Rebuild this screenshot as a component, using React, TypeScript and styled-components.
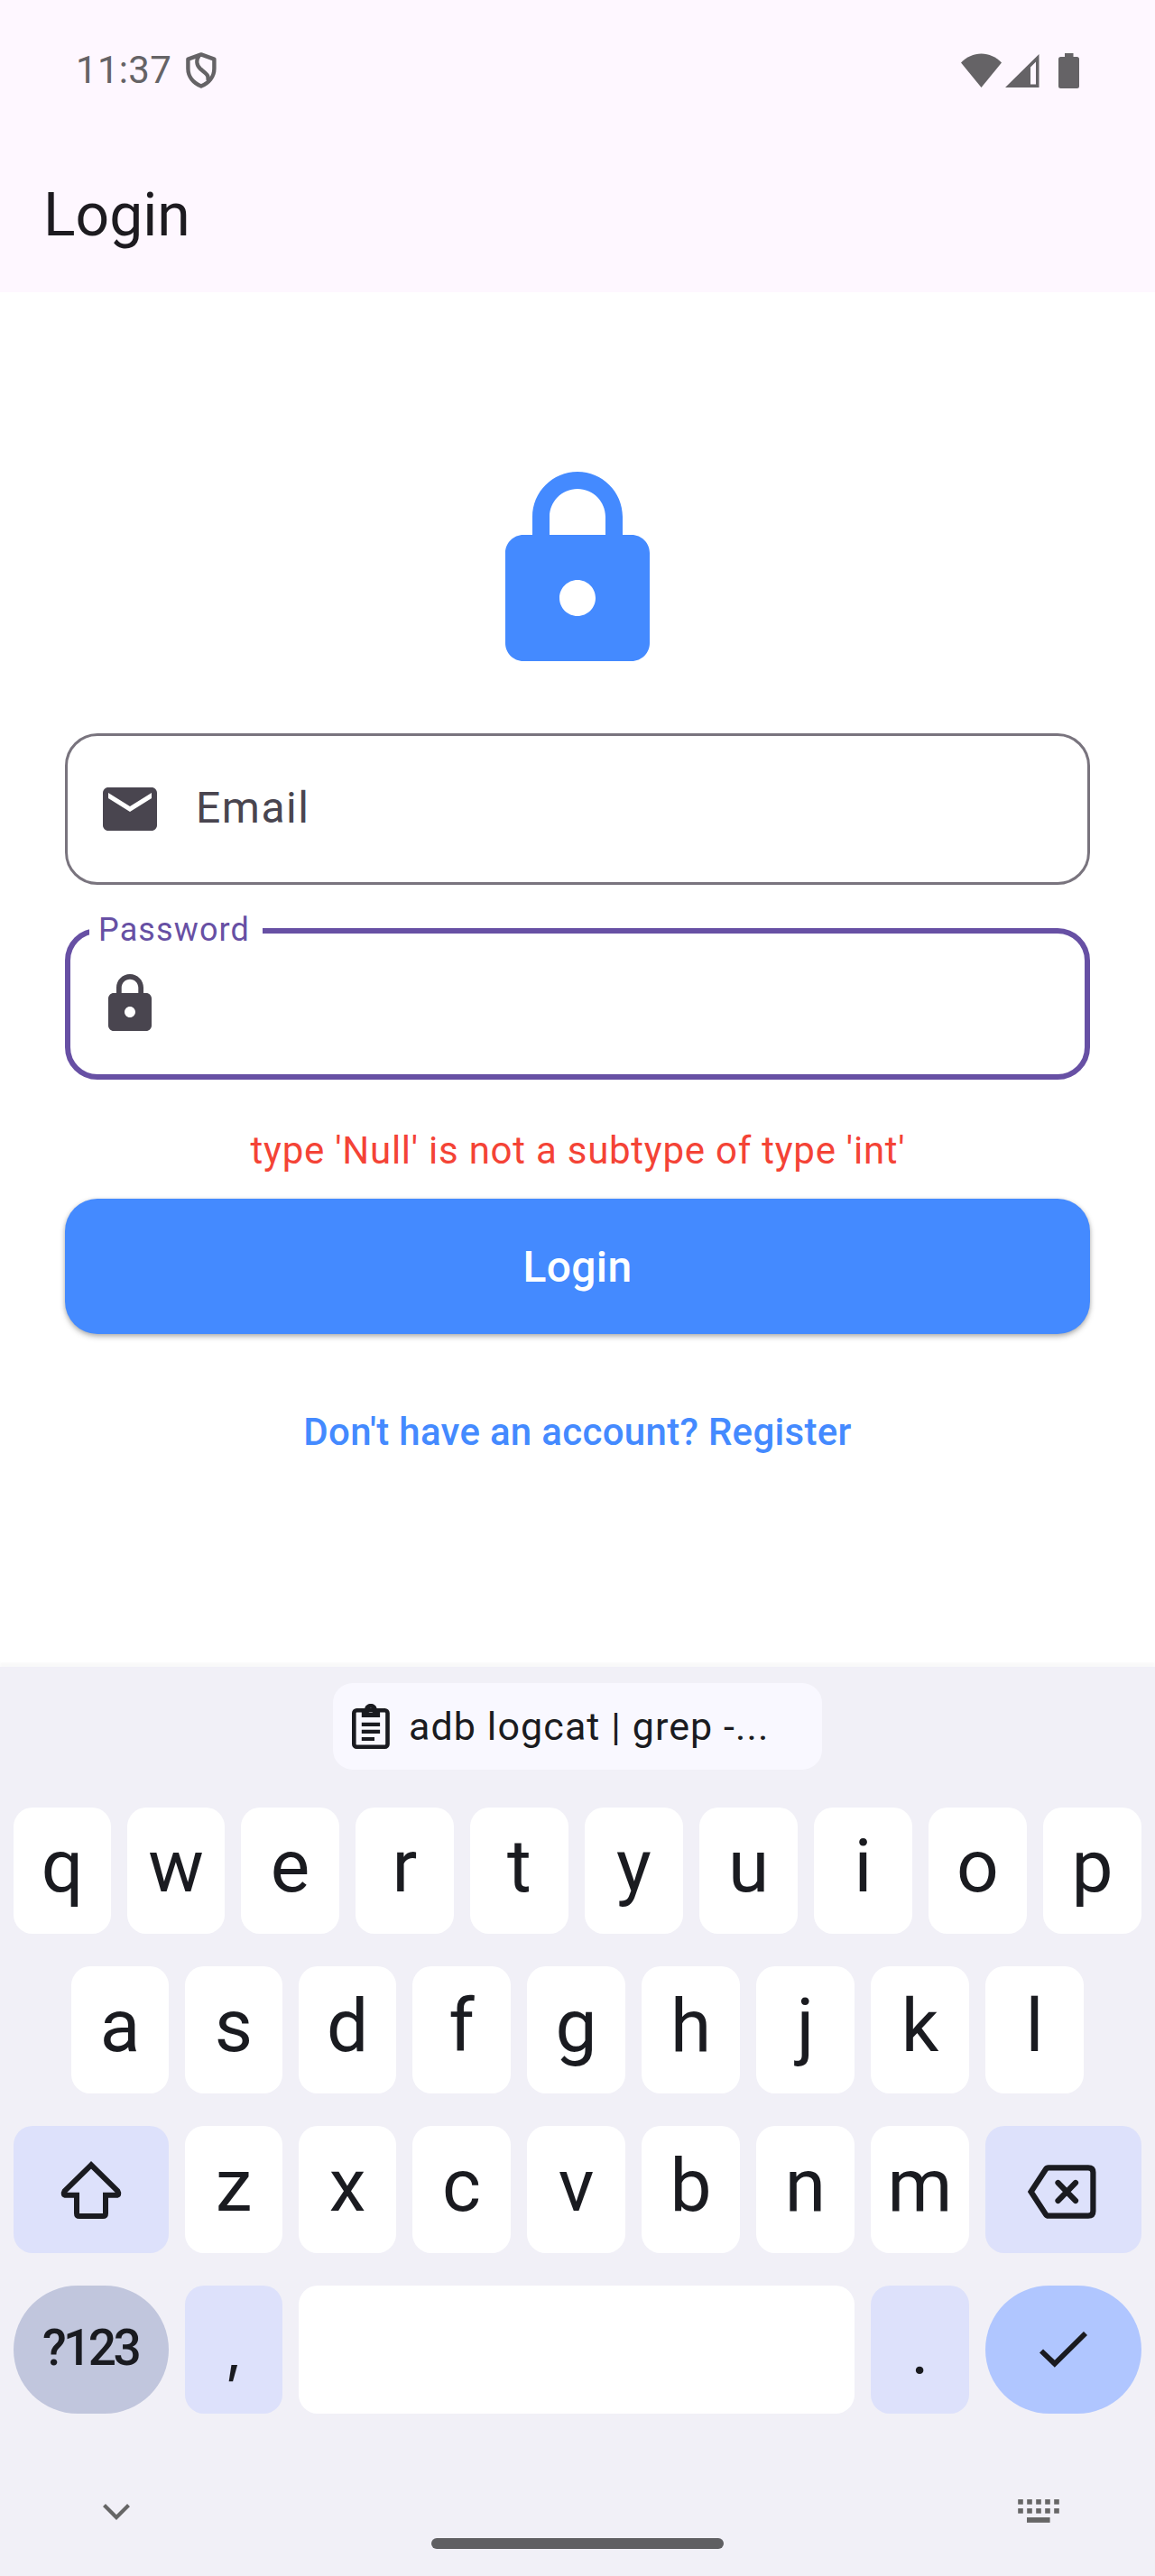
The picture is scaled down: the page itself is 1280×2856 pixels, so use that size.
import React from "react";
import styled, { createGlobalStyle, css } from "styled-components";

const GlobalStyle = createGlobalStyle`
  *, *::before, *::after { box-sizing: border-box; }
  body { margin: 0; background: #ffffff; }
`;

const Screen = styled.div`
  width: 1280px;
  height: 2856px;
  display: flex;
  flex-direction: column;
  overflow: hidden;
  background: #ffffff;
  font-family: Roboto, "Liberation Sans", sans-serif;
  color: #1d1b20;
`;

const Icon = styled.svg`
  display: block;
  flex: none;
`;

/* Top of the screen */

const StatusBar = styled.header`
  height: 156px;
  padding: 0 84px;
  display: flex;
  align-items: center;
  justify-content: space-between;
  background: #fef7ff;
  color: #656366;
`;

const StatusGroup = styled.div<{ $gap: number }>`
  display: flex;
  align-items: center;
  gap: ${(p) => p.$gap}px;
`;

const BatterySlot = styled.div`
  margin-left: 17px;
`;

const Clock = styled.span`
  width: 107px;
  font-size: 42px;
  line-height: 50px;
  letter-spacing: 0.3px;
`;

const AppBar = styled.div`
  height: 168px;
  padding: 0 48px 3px;
  display: flex;
  align-items: center;
  background: #fef7ff;
`;

const Title = styled.h1`
  margin: 0;
  font-size: 66px;
  font-weight: 400;
  line-height: 84px;
`;

/* Login form */

const Form = styled.main`
  height: 1524px;
  padding: 189px 72px 0;
  display: flex;
  flex-direction: column;
  align-items: center;
`;

const Field = styled.div<{ $focused?: boolean }>`
  position: relative;
  width: 100%;
  height: 168px;
  display: flex;
  align-items: center;
  gap: 37px;
  border-radius: 36px;
  color: #49454f;
  ${(p) =>
    p.$focused
      ? css`
          margin-top: 48px;
          padding: 0 30px;
          border: 6px solid #6750a4;
        `
      : css`
          margin-top: 60px;
          padding: 0 33px;
          border: 3px solid #79747e;
        `}
`;

const Placeholder = styled.span`
  padding-bottom: 3px;
  font-size: 48px;
  line-height: 60px;
  letter-spacing: 1.5px;
`;

const FloatingLabel = styled.label`
  position: absolute;
  left: 21px;
  top: -25px;
  width: 192px;
  padding-left: 10px;
  background: #ffffff;
  color: #6750a4;
  font-size: 36px;
  line-height: 42px;
  letter-spacing: 1.125px;
  white-space: nowrap;
`;

const ErrorText = styled.p`
  margin: 49px 0 23px;
  padding-left: 1px;
  color: #f44336;
  font-size: 42px;
  line-height: 60px;
  letter-spacing: 0.75px;
  white-space: nowrap;
`;

const SubmitButton = styled.button`
  width: 100%;
  height: 150px;
  padding: 2px 0 0;
  border: 0;
  border-radius: 36px;
  background: #448aff;
  color: #ffffff;
  font: 500 48px/60px Roboto, "Liberation Sans", sans-serif;
  letter-spacing: 0.3px;
  box-shadow: 0 3px 6px rgba(0, 0, 0, 0.26), 0 1px 4px rgba(0, 0, 0, 0.12);
`;

const RegisterLink = styled.a`
  margin-top: 79px;
  color: #448aff;
  font-size: 42px;
  font-weight: 500;
  line-height: 60px;
  letter-spacing: 0.3px;
  white-space: nowrap;
`;

/* On-screen keyboard */

const Keyboard = styled.section`
  flex: 1;
  display: flex;
  flex-direction: column;
  align-items: center;
  padding-top: 18px;
  background: #f1f0f7;
  color: #1a1b20;
  box-shadow: 0 -5px 2px rgba(0, 0, 0, 0.022);
`;

const ClipChip = styled.div`
  width: 542px;
  height: 96px;
  padding-left: 21px;
  display: flex;
  align-items: center;
  gap: 21px;
  border-radius: 22px;
  background: #f9f8ff;
  font-size: 43px;
  font-weight: 450;
  line-height: 56px;
  letter-spacing: 1.1px;
  white-space: nowrap;
`;

const KeyGrid = styled.div`
  width: 100%;
  margin-top: 42px;
  display: grid;
  grid-template-rows: 140px 141px 141px 142px;
  gap: 36px;
`;

const KeyRow = styled.div<{ $inset: number; $columns: string }>`
  padding: 0 ${(p) => p.$inset}px;
  display: grid;
  grid-template-columns: ${(p) => p.$columns};
  gap: 18px;
`;

const tones = {
  plain: "#ffffff",
  soft: "#dde1fb",
  mode: "#c1c6dd",
  action: "#b0c6ff",
};

const Key = styled.div<{ $tone?: keyof typeof tones; $pill?: boolean }>`
  min-width: 0;
  display: flex;
  align-items: center;
  justify-content: center;
  border-radius: ${(p) => (p.$pill ? 71 : 21)}px;
  background: ${(p) => tones[p.$tone ?? "plain"]};
`;

const Glyph = styled.span`
  padding-bottom: 10px;
  font-size: 82px;
  line-height: 100px;
`;

const Punctuation = styled.span<{ $slanted?: boolean }>`
  font-family: ${(p) => (p.$slanted ? "Inter" : "Roboto")}, sans-serif;
  font-size: ${(p) => (p.$slanted ? 66 : 76)}px;
  line-height: 90px;
`;

const ModeLabel = styled.span`
  padding-bottom: 4px;
  margin-right: 2px;
  font-size: 55px;
  font-weight: 500;
  line-height: 64px;
  letter-spacing: -3.6px;
`;

const DeleteSlot = styled.div`
  padding: 5px 3px 0 0;
`;

const NavBar = styled.nav`
  width: 100%;
  height: 180px;
  padding-left: 114px;
  display: grid;
  grid-template-columns: 364px 650px 46px;
  align-items: start;
  color: #666666;
`;

const NavItem = styled.div<{ $drop: number }>`
  padding-top: ${(p) => p.$drop}px;
`;

const HomeHandle = styled.div`
  width: 324px;
  height: 12px;
  border-radius: 6px;
  background: #5f5f62;
`;

const LOCK_PATH =
  "M18 8h-1V6c0-2.76-2.24-5-5-5S7 3.24 7 6v2H6c-1.1 0-2 .9-2 2v10c0 1.1.9 2 2 2h12c1.1 0 2-.9 2-2V10c0-1.1-.9-2-2-2zm-6 9c-1.1 0-2-.9-2-2s.9-2 2-2 2 .9 2 2-.9 2-2 2zm3.1-9H8.9V6c0-1.71 1.39-3.1 3.1-3.1 1.71 0 3.1 1.39 3.1 3.1v2z";

const LockIcon = ({ size, color }: { size: number; color: string }) => (
  <Icon width={size} height={size} viewBox="0 0 24 24" fill={color}>
    <path d={LOCK_PATH} />
  </Icon>
);

const MailIcon = () => (
  <Icon width="72" height="72" viewBox="0 0 24 24" fill="#49454f">
    <path d="M20 4H4c-1.1 0-1.99.9-1.99 2L2 18c0 1.1.9 2 2 2h16c1.1 0 2-.9 2-2V6c0-1.1-.9-2-2-2zm0 4l-8 5-8-5V6l8 5 8-5v2z" />
  </Icon>
);

const ShieldIcon = () => (
  <Icon width="40" height="44" viewBox="0 0 40 44" fill="none" stroke="currentColor" strokeWidth="4.4" strokeLinejoin="round">
    <path d="M19.9 4.4 34.4 9.6V20c0 9-6 16-14.5 19.5C11.4 36 5.4 29 5.4 20V9.6Z" />
    <path d="M18 5c-4 5.5-3.5 11.5 1.5 15.8 5 4 9.5 6.5 8 12.5" />
  </Icon>
);

const WifiIcon = () => (
  <Icon width="45" height="38" viewBox="0 0 45 38" fill="currentColor">
    <path d="M22.5 38 0 10.5C6 4.3 14 .5 22.5 .5S39 4.3 45 10.5Z" />
  </Icon>
);

const SignalIcon = () => (
  <Icon width="38" height="38" viewBox="0 0 38 38" fill="currentColor" fillRule="evenodd">
    <path d="M37.5 1V38H0ZM28 15.5V34.5H34V9.5Z" />
  </Icon>
);

const BatteryIcon = () => (
  <Icon width="23" height="39" viewBox="0 0 23 39" fill="currentColor">
    <path d="M7 0h9.5v4H20.5Q23 4 23 6.5V36.5Q23 39 20.5 39H2.5Q0 39 0 36.5V6.5Q0 4 2.5 4H7Z" />
  </Icon>
);

const ClipboardIcon = () => (
  <Icon width="42" height="50" viewBox="0 0 42 50" fill="#1a1b20">
    <rect x="2.3" y="7.3" width="37.2" height="40.4" rx="3" fill="none" stroke="#1a1b20" strokeWidth="4.6" />
    <path
      fillRule="evenodd"
      d="M10.8 15V5h3.4C14.8 2 17.5 0 20.9 0s6.1 2 6.7 5h3.5v10ZM20.9 4.7a2.7 2.7 0 1 0 0 5.4 2.7 2.7 0 1 0 0-5.4Z"
    />
    <path d="M10.8 20.8h20.3v4.2H10.8ZM10.8 28.8h20.3V33H10.8ZM10.8 36.9H25v4.2H10.8Z" />
  </Icon>
);

const ShiftIcon = () => (
  <Icon width="68" height="66" viewBox="0 0 68 66" fill="none" stroke="#1a1b20" strokeWidth="6">
    <path d="M34 5.3 4.7 34Q2 38.8 6.5 38.8H18V59Q18 62 21 62H47Q50 62 50 59V38.8H61.5Q66 38.8 63.3 34Z" />
  </Icon>
);

const BackspaceIcon = () => (
  <Icon width="76" height="60" viewBox="0 0 76 60" fill="none" stroke="#1a1b20" strokeWidth="6.2">
    <path d="M23 3.3H67Q72.4 3.3 72.4 8.5V51.5Q72.4 56.7 67 56.7H23Q21 56.7 19.8 54.8L3.6 30 19.8 5.2Q21 3.3 23 3.3Z" />
    <path d="M33.5 20 53 40M53 20 33.5 40" strokeLinecap="round" />
  </Icon>
);

const CheckIcon = () => (
  <Icon width="53" height="40" viewBox="0 0 53 40" fill="none" stroke="#1a1b20" strokeWidth="5.8">
    <path d="M2 21.5 16.8 35.7 51 2" />
  </Icon>
);

const ChevronIcon = () => (
  <Icon width="30" height="18" viewBox="0 0 30 18" fill="none" stroke="currentColor" strokeWidth="4.2">
    <path d="M1.5 1.5 15 15 28.5 1.5" />
  </Icon>
);

const SwitchKeyboardIcon = () => (
  <Icon width="46" height="26" viewBox="0 0 46 26" fill="currentColor">
    {[0, 10].map((y) =>
      [0, 10, 20, 30, 40].map((x) => <rect key={`${x}-${y}`} x={x + 0.2} y={y} width="5.6" height="5.6" />)
    )}
    <rect x="10" y="20" width="25.6" height="5.8" />
  </Icon>
);

const Letters = ({ keys }: { keys: string }) => (
  <>
    {keys.split("").map((k) => (
      <Key key={k}>
        <Glyph>{k}</Glyph>
      </Key>
    ))}
  </>
);

export default function App() {
  return (
    <Screen>
      <GlobalStyle />
      <StatusBar>
        <StatusGroup $gap={12}>
          <Clock>11:37</Clock>
          <ShieldIcon />
        </StatusGroup>
        <StatusGroup $gap={4}>
          <WifiIcon />
          <SignalIcon />
          <BatterySlot>
            <BatteryIcon />
          </BatterySlot>
        </StatusGroup>
      </StatusBar>
      <AppBar>
        <Title>Login</Title>
      </AppBar>

      <Form>
        <LockIcon size={240} color="#448aff" />
        <Field>
          <MailIcon />
          <Placeholder>Email</Placeholder>
        </Field>
        <Field $focused>
          <FloatingLabel>Password</FloatingLabel>
          <LockIcon size={72} color="#49454f" />
        </Field>
        <ErrorText>type 'Null' is not a subtype of type 'int'</ErrorText>
        <SubmitButton>Login</SubmitButton>
        <RegisterLink>Don't have an account? Register</RegisterLink>
      </Form>

      <Keyboard>
        <ClipChip>
          <ClipboardIcon />
          <span>adb logcat | grep -...</span>
        </ClipChip>
        <KeyGrid>
          <KeyRow $inset={15} $columns="repeat(2, 108px) repeat(8, 109px)">
            <Letters keys="qwertyuiop" />
          </KeyRow>
          <KeyRow $inset={79} $columns="repeat(3, 108px) repeat(6, 109px)">
            <Letters keys="asdfghjkl" />
          </KeyRow>
          <KeyRow $inset={15} $columns="172px repeat(2, 108px) repeat(5, 109px) 173px">
            <Key $tone="soft">
              <ShiftIcon />
            </Key>
            <Letters keys="zxcvbnm" />
            <Key $tone="soft">
              <DeleteSlot>
                <BackspaceIcon />
              </DeleteSlot>
            </Key>
          </KeyRow>
          <KeyRow $inset={15} $columns="172px 108px 616px 109px 173px">
            <Key $tone="mode" $pill>
              <ModeLabel>?123</ModeLabel>
            </Key>
            <Key $tone="soft">
              <Punctuation $slanted>,</Punctuation>
            </Key>
            <Key />
            <Key $tone="soft">
              <Punctuation>.</Punctuation>
            </Key>
            <Key $tone="action" $pill>
              <CheckIcon />
            </Key>
          </KeyRow>
        </KeyGrid>
        <NavBar>
          <NavItem $drop={100}>
            <ChevronIcon />
          </NavItem>
          <NavItem $drop={138}>
            <HomeHandle />
          </NavItem>
          <NavItem $drop={95}>
            <SwitchKeyboardIcon />
          </NavItem>
        </NavBar>
      </Keyboard>
    </Screen>
  );
}
